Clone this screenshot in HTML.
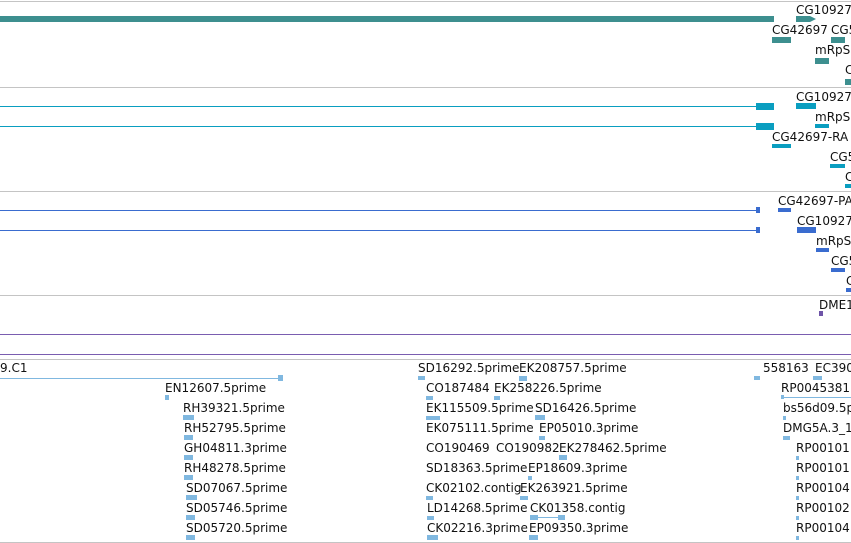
<!DOCTYPE html>
<html><head><meta charset="utf-8"><style>
body{margin:0;width:851px;height:543px;overflow:hidden;background:#fff;position:relative;font-family:"DejaVu Sans","Liberation Sans",sans-serif;font-size:12px;color:#111}
.l{position:absolute;white-space:nowrap;line-height:14px;padding-top:2px}
.b{position:absolute}
.h{position:absolute;left:0;width:851px;height:1px;background:#c4c4c4}
</style></head><body>
<div class="h" style="top:1px"></div>
<div class="h" style="top:87px"></div>
<div class="h" style="top:191px"></div>
<div class="h" style="top:295px"></div>
<div class="h" style="top:359px"></div>
<div class="h" style="top:542px"></div>

<div class="b" style="left:0;top:16px;width:774px;height:6px;background:#3d8f8f"></div>
<div class="l" style="left:796px;top:1px">CG10927</div>
<div class="b" style="left:796px;top:16px;width:14px;height:6px;background:#3d8f8f"></div>
<div class="b" style="left:810px;top:16px;width:0;height:0;border-top:3px solid transparent;border-bottom:3px solid transparent;border-left:6px solid #3d8f8f"></div>
<div class="l" style="left:772px;top:21px">CG42697</div>
<div class="l" style="left:831px;top:21px">CG5</div>
<div class="b" style="left:772px;top:37px;width:19px;height:6px;background:#3d8f8f"></div>
<div class="b" style="left:831px;top:37px;width:14px;height:6px;background:#3d8f8f"></div>
<div class="l" style="left:815px;top:41px">mRpS2</div>
<div class="b" style="left:815px;top:58px;width:14px;height:6px;background:#3d8f8f"></div>
<div class="l" style="left:845px;top:61px">C</div>
<div class="b" style="left:845px;top:79px;width:6px;height:6px;background:#3d8f8f"></div>

<div class="b" style="left:0;top:106px;width:760px;height:1px;background:#0a9ec0"></div>
<div class="b" style="left:756px;top:103px;width:18px;height:7px;background:#0a9ec0"></div>
<div class="l" style="left:796px;top:88px">CG10927</div>
<div class="b" style="left:796px;top:103px;width:20px;height:6px;background:#0a9ec0"></div>
<div class="b" style="left:0;top:126px;width:760px;height:1px;background:#0a9ec0"></div>
<div class="b" style="left:756px;top:123px;width:18px;height:7px;background:#0a9ec0"></div>
<div class="l" style="left:815px;top:108px">mRpS2</div>
<div class="b" style="left:815px;top:124px;width:14px;height:4px;background:#0a9ec0"></div>
<div class="l" style="left:772px;top:128px">CG42697-RA</div>
<div class="b" style="left:772px;top:144px;width:19px;height:4px;background:#0a9ec0"></div>
<div class="l" style="left:830px;top:148px">CG5</div>
<div class="b" style="left:830px;top:164px;width:15px;height:4px;background:#0a9ec0"></div>
<div class="l" style="left:845px;top:168px">C</div>
<div class="b" style="left:845px;top:184px;width:6px;height:4px;background:#0a9ec0"></div>

<div class="b" style="left:0;top:210px;width:760px;height:1px;background:#3a6ccf"></div>
<div class="b" style="left:756px;top:207px;width:4px;height:6px;background:#3a6ccf"></div>
<div class="b" style="left:0;top:230px;width:760px;height:1px;background:#3a6ccf"></div>
<div class="b" style="left:756px;top:227px;width:4px;height:6px;background:#3a6ccf"></div>
<div class="l" style="left:778px;top:192px">CG42697-PA</div>
<div class="b" style="left:778px;top:208px;width:13px;height:4px;background:#3a6ccf"></div>
<div class="l" style="left:797px;top:212px">CG10927</div>
<div class="b" style="left:797px;top:227px;width:19px;height:6px;background:#3a6ccf"></div>
<div class="l" style="left:816px;top:232px">mRpS2</div>
<div class="b" style="left:816px;top:248px;width:13px;height:4px;background:#3a6ccf"></div>
<div class="l" style="left:831px;top:252px">CG5</div>
<div class="b" style="left:831px;top:268px;width:14px;height:4px;background:#3a6ccf"></div>
<div class="l" style="left:846px;top:272px">C</div>
<div class="b" style="left:846px;top:288px;width:5px;height:4px;background:#3a6ccf"></div>

<div class="l" style="left:819px;top:296px">DME1</div>
<div class="b" style="left:819px;top:311px;width:4px;height:5px;background:#6f55a8"></div>
<div class="b" style="left:0;top:334px;width:851px;height:1px;background:#7a5db0"></div>
<div class="b" style="left:0;top:354px;width:851px;height:1px;background:#7a5db0"></div>

<div class="b" style="left:0;top:378px;width:283px;height:1px;background:#80b8e0"></div>
<div class="b" style="left:278px;top:375px;width:5px;height:6px;background:#80b8e0"></div>
<div class="l" style="left:0;top:359px">9.C1</div>
<div class="l" style="left:418px;top:359px">SD16292.5prime</div>
<div class="l" style="left:519px;top:359px">EK208757.5prime</div>
<div class="l" style="left:763px;top:359px">558163</div>
<div class="l" style="left:815px;top:359px">EC390</div>
<div class="b" style="left:418px;top:376px;width:7px;height:4px;background:#80b8e0"></div>
<div class="b" style="left:519px;top:376px;width:8px;height:5px;background:#80b8e0"></div>
<div class="b" style="left:754px;top:376px;width:6px;height:4px;background:#80b8e0"></div>
<div class="b" style="left:813px;top:376px;width:9px;height:4px;background:#80b8e0"></div>

<div class="l" style="left:165px;top:379px">EN12607.5prime</div>
<div class="l" style="left:426px;top:379px">CO187484</div>
<div class="l" style="left:494px;top:379px">EK258226.5prime</div>
<div class="l" style="left:781px;top:379px">RP0045381</div>
<div class="b" style="left:165px;top:395px;width:4px;height:5px;background:#80b8e0"></div>
<div class="b" style="left:426px;top:396px;width:7px;height:4px;background:#80b8e0"></div>
<div class="b" style="left:494px;top:396px;width:6px;height:4px;background:#80b8e0"></div>
<div class="b" style="left:781px;top:397px;width:70px;height:1px;background:#80b8e0"></div>
<div class="b" style="left:781px;top:395px;width:3px;height:4px;background:#80b8e0"></div>

<div class="l" style="left:183px;top:399px">RH39321.5prime</div>
<div class="l" style="left:426px;top:399px">EK115509.5prime</div>
<div class="l" style="left:535px;top:399px">SD16426.5prime</div>
<div class="l" style="left:783px;top:399px">bs56d09.5p</div>
<div class="b" style="left:183px;top:415px;width:11px;height:5px;background:#80b8e0"></div>
<div class="b" style="left:426px;top:416px;width:14px;height:4px;background:#80b8e0"></div>
<div class="b" style="left:535px;top:415px;width:10px;height:5px;background:#80b8e0"></div>
<div class="b" style="left:783px;top:416px;width:3px;height:4px;background:#80b8e0"></div>

<div class="l" style="left:184px;top:419px">RH52795.5prime</div>
<div class="l" style="left:426px;top:419px">EK075111.5prime</div>
<div class="l" style="left:539px;top:419px">EP05010.3prime</div>
<div class="l" style="left:783px;top:419px">DMG5A.3_1</div>
<div class="b" style="left:184px;top:435px;width:9px;height:5px;background:#80b8e0"></div>
<div class="b" style="left:539px;top:436px;width:6px;height:4px;background:#80b8e0"></div>
<div class="b" style="left:783px;top:436px;width:7px;height:4px;background:#80b8e0"></div>

<div class="l" style="left:184px;top:439px">GH04811.3prime</div>
<div class="l" style="left:426px;top:439px">CO190469</div>
<div class="l" style="left:496px;top:439px">CO190982</div>
<div class="l" style="left:559px;top:439px">EK278462.5prime</div>
<div class="l" style="left:796px;top:439px">RP00101</div>
<div class="b" style="left:184px;top:455px;width:9px;height:5px;background:#80b8e0"></div>
<div class="b" style="left:559px;top:455px;width:8px;height:5px;background:#80b8e0"></div>
<div class="b" style="left:796px;top:456px;width:3px;height:4px;background:#80b8e0"></div>

<div class="l" style="left:184px;top:459px">RH48278.5prime</div>
<div class="l" style="left:426px;top:459px">SD18363.5prime</div>
<div class="l" style="left:528px;top:459px">EP18609.3prime</div>
<div class="l" style="left:796px;top:459px">RP00101</div>
<div class="b" style="left:184px;top:475px;width:9px;height:5px;background:#80b8e0"></div>
<div class="b" style="left:528px;top:476px;width:4px;height:4px;background:#80b8e0"></div>
<div class="b" style="left:796px;top:476px;width:3px;height:4px;background:#80b8e0"></div>

<div class="l" style="left:186px;top:479px">SD07067.5prime</div>
<div class="l" style="left:426px;top:479px">CK02102.contig</div>
<div class="l" style="left:520px;top:479px">EK263921.5prime</div>
<div class="l" style="left:796px;top:479px">RP00104</div>
<div class="b" style="left:186px;top:495px;width:11px;height:5px;background:#80b8e0"></div>
<div class="b" style="left:426px;top:496px;width:7px;height:4px;background:#80b8e0"></div>
<div class="b" style="left:520px;top:496px;width:8px;height:4px;background:#80b8e0"></div>
<div class="b" style="left:796px;top:496px;width:3px;height:4px;background:#80b8e0"></div>

<div class="l" style="left:186px;top:499px">SD05746.5prime</div>
<div class="l" style="left:427px;top:499px">LD14268.5prime</div>
<div class="l" style="left:530px;top:499px">CK01358.contig</div>
<div class="l" style="left:796px;top:499px">RP00102</div>
<div class="b" style="left:186px;top:515px;width:9px;height:5px;background:#80b8e0"></div>
<div class="b" style="left:427px;top:516px;width:7px;height:4px;background:#80b8e0"></div>
<div class="b" style="left:530px;top:517px;width:35px;height:1px;background:#80b8e0"></div>
<div class="b" style="left:530px;top:515px;width:8px;height:5px;background:#80b8e0"></div>
<div class="b" style="left:558px;top:515px;width:7px;height:5px;background:#80b8e0"></div>
<div class="b" style="left:796px;top:516px;width:3px;height:4px;background:#80b8e0"></div>

<div class="l" style="left:186px;top:519px">SD05720.5prime</div>
<div class="l" style="left:427px;top:519px">CK02216.3prime</div>
<div class="l" style="left:529px;top:519px">EP09350.3prime</div>
<div class="l" style="left:796px;top:519px">RP00104</div>
<div class="b" style="left:186px;top:535px;width:9px;height:5px;background:#80b8e0"></div>
<div class="b" style="left:427px;top:535px;width:11px;height:5px;background:#80b8e0"></div>
<div class="b" style="left:529px;top:535px;width:9px;height:5px;background:#80b8e0"></div>
<div class="b" style="left:796px;top:536px;width:3px;height:4px;background:#80b8e0"></div>
</body></html>
